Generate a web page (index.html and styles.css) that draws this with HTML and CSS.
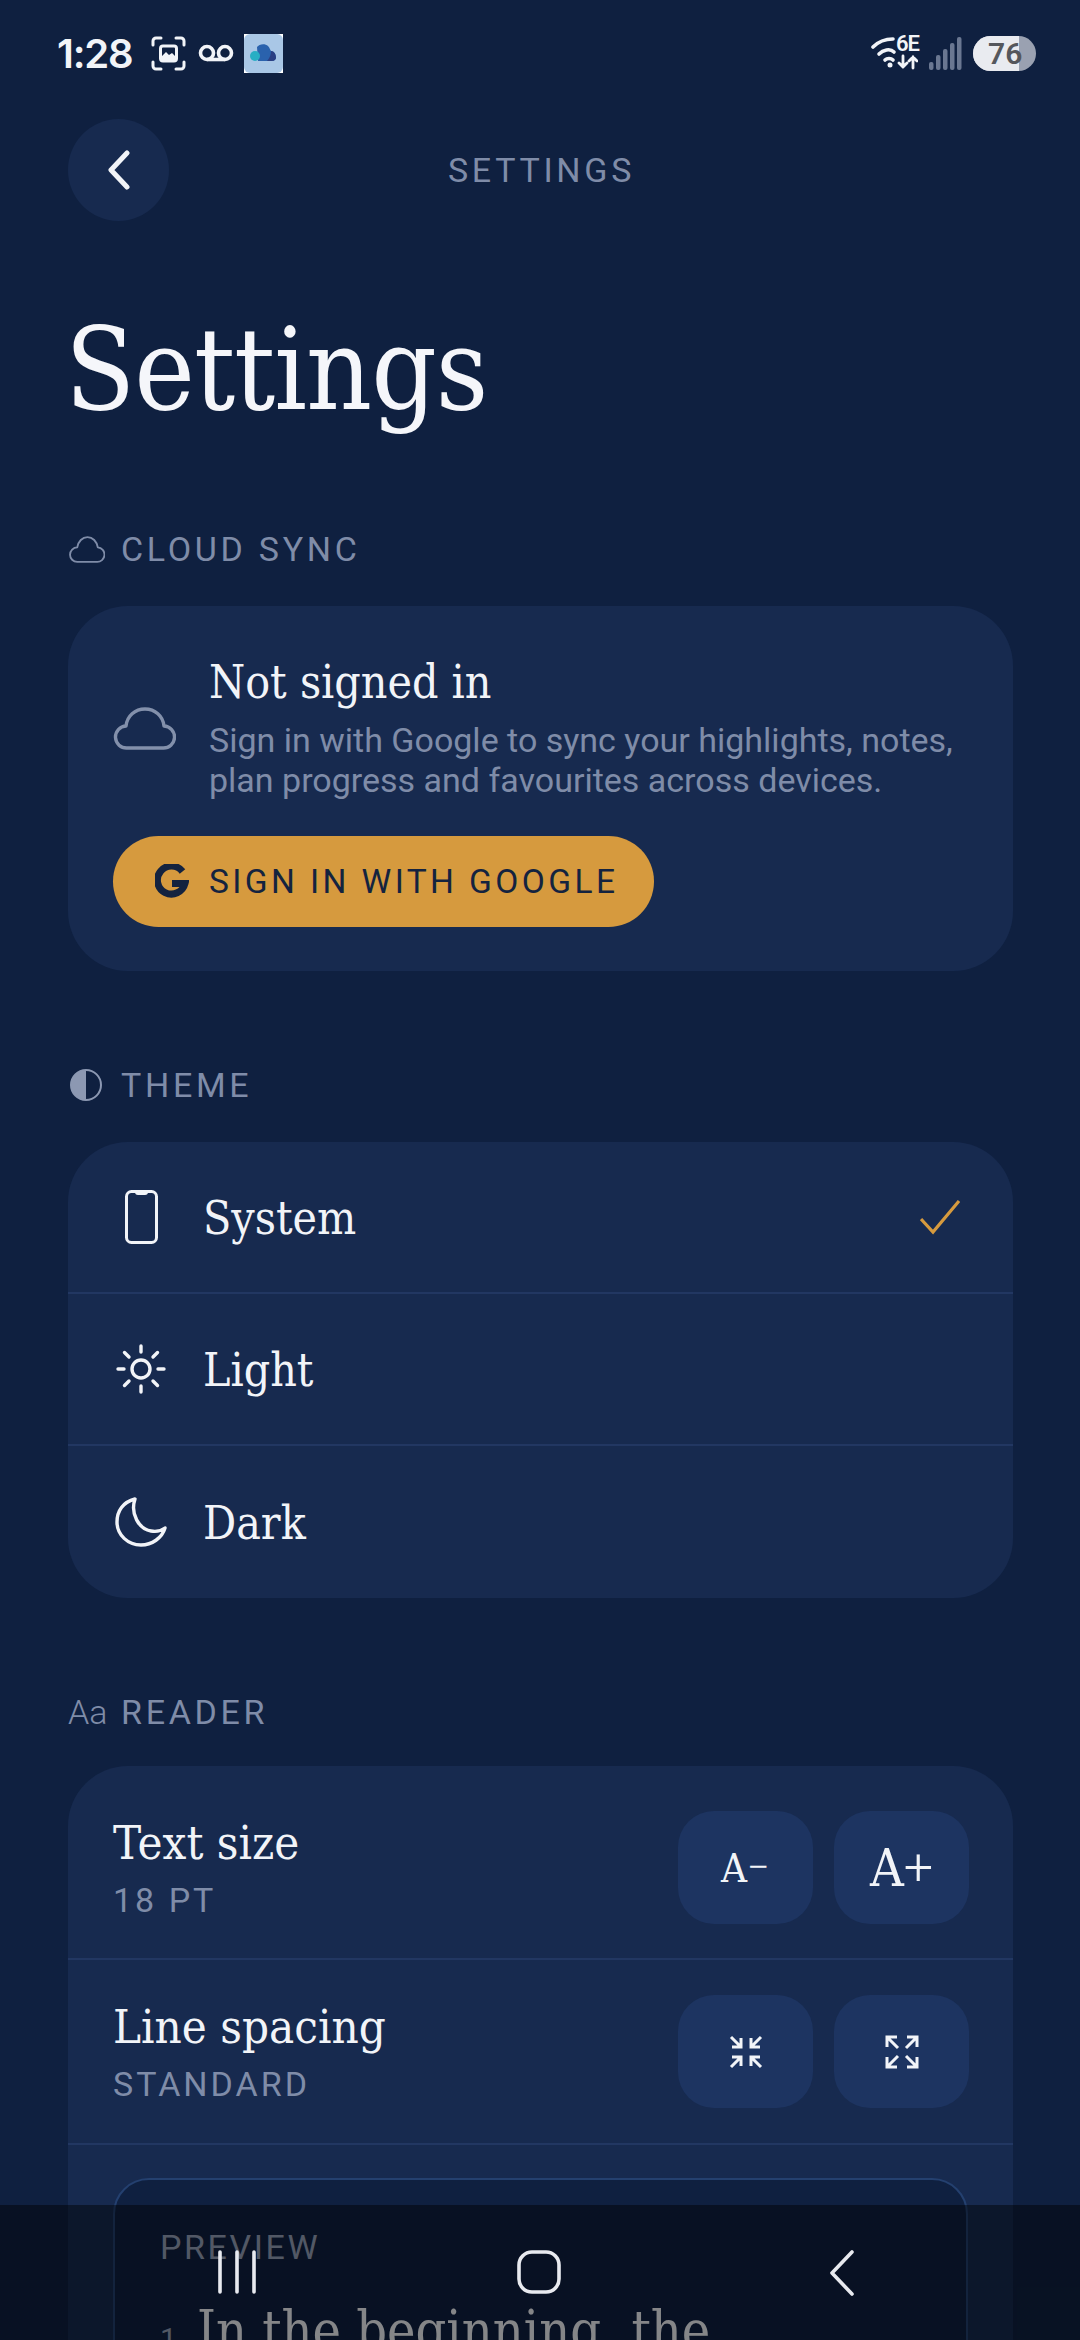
FILE: index.html
```html
<!DOCTYPE html>
<html lang="en">

<head>
    <meta charset="UTF-8">
    <meta name="viewport" content="width=device-width, initial-scale=1.0">
    <title>Settings</title>
    <link rel="stylesheet" href="styles.css">
</head>

<body>
    <div class="screen">
        <div class="statusBar">
            <div class="statusLeft">
                <span class="time">1:28</span>
                <svg class="icoShot" viewBox="0 0 35 35" fill="none" stroke="#f2f4f8" stroke-width="3" stroke-linecap="round">
                    <path d="M2 9V5a3 3 0 0 1 3-3h5M25 2h5a3 3 0 0 1 3 3v4M33 26v4a3 3 0 0 1-3 3h-5M10 33H5a3 3 0 0 1-3-3v-4"/>
                    <rect x="9.500" y="10" width="16" height="15" rx="2.500"/>
                    <path d="M10 21l5-5 3 3 3-2 4 4v3H10z" fill="#f2f4f8" stroke="none"/>
                </svg>
                <svg class="icoVoice" viewBox="0 0 36 20" fill="none" stroke="#f2f4f8" stroke-width="3.600">
                    <circle cx="9" cy="10" r="6.500"/>
                    <circle cx="27" cy="10" r="6.500"/>
                    <path d="M9 16.500h18"/>
                </svg>
                <svg class="icoApp" viewBox="0 0 39 39">
                    <rect width="39" height="39" fill="#fff"/>
                    <rect width="39" height="39" rx="6" fill="#a9c7e6"/>
                    <path d="M13 13c2-3 8-4 11-1 2 2 2 4 3 5 3 0 5 3 5 7-1 3-3 3-6 3H14z" fill="#2a62ad"/>
                    <path d="M27 17c3 0 5 3 5 7-1 3-3 3-6 3h-3c3-3 4-7 4-10z" fill="#2b3f83"/>
                    <circle cx="11" cy="22" r="5" fill="#27aec4"/>
                </svg>
            </div>
            <div class="statusRight">
                <div class="wifi">
                    <svg class="icoWifi" viewBox="0 0 47 34" fill="none" stroke="#f2f4f8" stroke-width="3.600" stroke-linecap="round">
                        <path d="M2 11c5-5 11-8 20-8"/>
                        <path d="M8 18c4-4 11-6 15-2"/>
                        <path d="M14 24c2-2 6-2 8 0"/>
                        <circle cx="19" cy="29" r="2.500" fill="#f2f4f8" stroke="none"/>
                        <path d="M32 20v11m-4-4 4 4 4-4M42 32V21m-4 4 4-4 4 4" stroke-width="2.800"/>
                    </svg>
                    <span class="wifiTag">6E</span>
                </div>
                <svg class="icoSignal" viewBox="0 0 33 33" fill="#6a7791">
                    <rect x="0" y="25" width="4.500" height="8" rx="2"/>
                    <rect x="7" y="18" width="4.500" height="15" rx="2"/>
                    <rect x="14" y="12" width="4.500" height="21" rx="2"/>
                    <rect x="21" y="6" width="4.500" height="27" rx="2"/>
                    <rect x="28" y="0" width="4.500" height="33" rx="2"/>
                </svg>
                <div class="battery"><div class="batteryFill"><span>76</span></div></div>
            </div>
        </div>

        <div class="topBar">
            <div class="backBtn">
                <svg viewBox="0 0 24 40" fill="none" stroke="#f2f4f8" stroke-width="5" stroke-linecap="round" stroke-linejoin="round">
                    <path d="M20 3 4 20l16 17"/>
                </svg>
            </div>
            <span class="topTitle">SETTINGS</span>
        </div>

        <h1 class="pageTitle">Settings</h1>

        <div class="sectionLabel">
            <span class="labelIcon">
                <svg class="icoCloudSmall" viewBox="0 0 35 26" fill="none" stroke="#7f8ca8" stroke-width="1.800" stroke-linejoin="round">
                    <path d="M8 25h19a7 7 0 0 0 1-14C27 5 23 1 18 1s-9 4-10 10a7 7 0 0 0 0 14z"/>
                </svg>
            </span>
            <span>CLOUD SYNC</span>
        </div>
        <div class="card signCard">
            <div class="signRow">
                <svg class="icoCloudBig" viewBox="0 0 63 43" fill="none" stroke="#8390ab" stroke-width="3.400" stroke-linejoin="round">
                    <path d="M14 41h36a11 11 0 0 0 1-22C50 9 42 2 32 2S14 9 13 19a11 11 0 0 0 1 22z"/>
                </svg>
                <div>
                    <div class="signTitle">Not signed in</div>
                    <div class="signText">Sign in with Google to sync your highlights, notes,<br>plan progress and favourites across devices.</div>
                </div>
            </div>
            <div class="googleBtn">
                <svg class="icoG" viewBox="0 0 34 36" fill="none" stroke="#14233f" stroke-width="7">
                    <path d="M27.500 7.500A14 14 0 1 0 30 19.500H17"/>
                </svg>
                <span>SIGN IN WITH GOOGLE</span>
            </div>
        </div>

        <div class="sectionLabel">
            <span class="labelIcon">
                <svg class="icoTheme" viewBox="0 0 32 32">
                    <circle cx="16" cy="16" r="15" fill="none" stroke="#8c98b2" stroke-width="2"/>
                    <path d="M16 1a15 15 0 0 0 0 30z" fill="#8c98b2"/>
                </svg>
            </span>
            <span>THEME</span>
        </div>
        <div class="card">
            <div class="themeRow">
                <span class="themeIcon">
                    <svg class="icoPhone" viewBox="0 0 33 54" fill="none" stroke="#f2f4f8" stroke-width="3">
                        <rect x="1.500" y="1.500" width="30" height="51" rx="5"/>
                        <path d="M10 2h13c0 2-1 3-3 3h-7c-2 0-3-1-3-3z" fill="#f2f4f8" stroke="none"/>
                    </svg>
                </span>
                <span class="themeName">System</span>
                <svg class="icoCheck" viewBox="0 0 40 36" fill="none" stroke="#d69a3e" stroke-width="3.200">
                    <path d="M1 20l12 13L39 2"/>
                </svg>
            </div>
            <div class="themeRow">
                <span class="themeIcon">
                    <svg class="icoSun" viewBox="0 0 50 50" fill="none" stroke="#f2f4f8" stroke-width="3.400" stroke-linecap="round">
                        <circle cx="25" cy="25" r="9"/>
                        <path d="M25 2v6M25 42v6M2 25h6M42 25h6M8.500 8.500l4.500 4.500M37 37l4.500 4.500M8.500 41.500l4.500-4.500M37 13l4.500-4.500"/>
                    </svg>
                </span>
                <span class="themeName">Light</span>
            </div>
            <div class="themeRow">
                <span class="themeIcon">
                    <svg class="icoMoon" viewBox="0 0 52 50" fill="none" stroke="#f2f4f8" stroke-width="3.400" stroke-linejoin="round">
                        <path d="M20 2C8 5 2 14 2 25c0 13 11 23 24 23 11 0 21-7 24-17-4 3-9 4-14 3C24 32 15 17 20 2z"/>
                    </svg>
                </span>
                <span class="themeName">Dark</span>
            </div>
        </div>

        <div class="sectionLabel">
            <span class="labelIcon labelAa">Aa</span>
            <span>READER</span>
        </div>
        <div class="card readerCard">
            <div class="readerRow">
                <div>
                    <div class="readerName">Text size</div>
                    <div class="readerValue">18 PT</div>
                </div>
                <div class="readerBtns">
                    <div class="squareBtn smallA">A<span class="signMark">−</span></div>
                    <div class="squareBtn bigA">A<span class="signMark">+</span></div>
                </div>
            </div>
            <div class="readerRow">
                <div>
                    <div class="readerName">Line spacing</div>
                    <div class="readerValue">STANDARD</div>
                </div>
                <div class="readerBtns">
                    <div class="squareBtn">
                        <svg class="icoArrows" viewBox="0 0 34 34" fill="none" stroke="#f2f4f8" stroke-width="3">
                            <path d="M2 2l9 9M12 3v9H3M32 2l-9 9M22 3v9h9M2 32l9-9M12 31v-9H3M32 32l-9-9M22 31v-9h9"/>
                        </svg>
                    </div>
                    <div class="squareBtn">
                        <svg class="icoArrows" viewBox="0 0 34 34" fill="none" stroke="#f2f4f8" stroke-width="3">
                            <path d="M3 3l10 10M2 12V2h10M31 3 21 13M32 12V2H22M3 31l10-10M2 22v10h10M31 31 21 21M32 22v10H22"/>
                        </svg>
                    </div>
                </div>
            </div>
            <div class="previewBox">
                <div class="previewLabel">PREVIEW</div>
                <div class="previewText"><span class="verseNum">1</span>In the beginning, the</div>
            </div>
        </div>

        <div class="navBar">
            <svg class="navMenu" viewBox="0 0 40 44" fill="none" stroke="#e8eaef" stroke-width="3.600" stroke-linecap="round">
                <path d="M3 2v40M20 2v40M37 2v40"/>
            </svg>
            <svg class="navHome" viewBox="0 0 44 44" fill="none" stroke="#e8eaef" stroke-width="3.600">
                <rect x="2" y="2" width="40" height="40" rx="13"/>
            </svg>
            <svg class="navBack" viewBox="0 0 26 46" fill="none" stroke="#e8eaef" stroke-width="3.600" stroke-linecap="round" stroke-linejoin="round">
                <path d="M23 2 3 23l20 21"/>
            </svg>
        </div>
    </div>
</body>

</html>
```

FILE: styles.css
```css
* {
    box-sizing: border-box;
}

body {
    margin: 0;
    background-color: #0f2040;
}

.screen {
    position: relative;
    width: 1080px;
    height: 2340px;
    padding: 0 67px 0 68px;
    overflow: hidden;
    background-color: #0f2040;
    color: #f2f4f8;
    font-family: "Roboto", "Liberation Sans", sans-serif;
}

/* status bar */
.statusBar {
    display: flex;
    justify-content: space-between;
    align-items: center;
    height: 106px;
    margin: 0 -23px 0 -11px;
}

.statusLeft,
.statusRight {
    display: flex;
    align-items: center;
}

.time {
    font-family: "Inter", "Roboto", sans-serif;
    font-size: 40px;
    font-weight: 600;
    letter-spacing: -1.200px;
    margin-right: 19px;
}

.icoShot {
    width: 35px;
    height: 35px;
    margin-right: 12px;
}

.icoVoice {
    width: 36px;
    height: 20px;
    margin-right: 10px;
}

.icoApp {
    width: 39px;
    height: 39px;
}

.wifi {
    position: relative;
    width: 47px;
    height: 34px;
    margin-right: 11px;
}

.icoWifi {
    width: 47px;
    height: 34px;
    display: block;
}

.wifiTag {
    position: absolute;
    top: -4px;
    right: -1px;
    font-size: 22px;
    font-weight: 600;
    line-height: 24px;
    letter-spacing: -1px;
}

.icoSignal {
    width: 33px;
    height: 33px;
    margin-right: 11px;
}

.battery {
    width: 63px;
    height: 35px;
    border-radius: 18px;
    background-color: #9aa1b1;
    overflow: hidden;
}

.batteryFill {
    width: 46px;
    height: 35px;
    padding-left: 15px;
    background-color: #e9ebf0;
    color: #55575c;
    font-size: 30px;
    font-weight: 600;
    line-height: 35px;
}

/* header */
.topBar {
    position: relative;
    display: flex;
    align-items: center;
    justify-content: center;
    height: 102px;
    margin-top: 13px;
}

.backBtn {
    position: absolute;
    left: 0;
    top: 0;
    width: 101px;
    height: 102px;
    border-radius: 50%;
    background-color: #172a4f;
    display: flex;
    align-items: center;
    justify-content: center;
}

.backBtn svg {
    width: 24px;
    height: 40px;
    margin-left: 1px;
}

.topTitle {
    margin-left: 2px;
    font-size: 34px;
    letter-spacing: 3.700px;
    color: #7f8ca8;
}

.pageTitle {
    margin: 79px 0 0 -3px;
    font-family: "DejaVu Serif Condensed", "DejaVu Serif", "Liberation Serif", serif;
    font-size: 114px;
    font-weight: 400;
    line-height: 140px;
    letter-spacing: -1px;
    color: #f5f6fa;
}

/* section */
.sectionLabel {
    display: flex;
    align-items: center;
    height: 40px;
    margin-top: 94px;
    font-size: 34px;
    letter-spacing: 3.700px;
    color: #7f8ca8;
}

.pageTitle + .sectionLabel {
    margin-top: 89px;
}

.labelIcon {
    display: flex;
    align-items: center;
    width: 53px;
    flex-shrink: 0;
}

.icoCloudSmall {
    width: 36px;
    height: 27px;
    margin-left: 1px;
}

.icoTheme {
    width: 32px;
    height: 32px;
    margin-left: 2px;
}

.labelAa {
    font-weight: 300;
    font-size: 34px;
    letter-spacing: 0;
}

.card {
    margin-top: 37px;
    border-radius: 60px;
    background-color: #172a4f;
    overflow: hidden;
}

.signCard {
    height: 365px;
    padding: 45px;
}

.signRow {
    display: flex;
    align-items: center;
    gap: 33px;
    height: 149px;
}

.icoCloudBig {
    width: 63px;
    height: 43px;
    flex-shrink: 0;
    margin-top: 6px;
}

.signTitle {
    margin: -3px 0 3px;
    font-family: "DejaVu Serif Condensed", "DejaVu Serif", "Liberation Serif", serif;
    font-size: 46px;
    line-height: 69px;
}

.signText {
    font-size: 34px;
    line-height: 40px;
    color: #7f8ca8;
    white-space: nowrap;
}

.googleBtn {
    display: flex;
    align-items: center;
    gap: 20px;
    width: 541px;
    height: 91px;
    margin-top: 36px;
    padding-left: 42px;
    border-radius: 46px;
    background-color: #d69a3e;
    color: #14233f;
    font-size: 33.500px;
    letter-spacing: 3.400px;
}

.icoG {
    width: 34px;
    height: 36px;
}

/* theme */
.themeRow {
    display: flex;
    align-items: center;
    height: 152px;
    padding: 0 53px 0 45px;
    border-bottom: 2px solid #223762;
}

.themeRow:last-child {
    border-bottom: 0;
}

.themeIcon {
    display: flex;
    align-items: center;
    justify-content: center;
    width: 56px;
    margin-right: 34px;
}

.icoPhone {
    width: 33px;
    height: 54px;
}

.icoSun {
    width: 50px;
    height: 50px;
}

.icoMoon {
    width: 52px;
    height: 50px;
}

.themeName {
    flex: 1;
    padding-top: 2px;
    font-family: "DejaVu Serif Condensed", "DejaVu Serif", "Liberation Serif", serif;
    font-size: 46px;
}

.icoCheck {
    width: 40px;
    height: 36px;
}

/* reader */
.readerCard {
    height: 800px;
    margin-top: 34px;
    padding-top: 10px;
}

.readerRow {
    display: flex;
    align-items: center;
    justify-content: space-between;
    padding: 35px 44px 35px 45px;
    border-bottom: 2px solid #223762;
}

.readerRow:first-child {
    padding-bottom: 34px;
}

.readerName {
    font-family: "DejaVu Serif Condensed", "DejaVu Serif", "Liberation Serif", serif;
    font-size: 47px;
    line-height: 60px;
}

.readerValue {
    margin-top: 5px;
    font-size: 34px;
    line-height: 44px;
    letter-spacing: 3px;
    color: #7f8ca8;
}

.readerBtns {
    display: flex;
    gap: 21px;
}

.squareBtn {
    display: flex;
    align-items: center;
    justify-content: center;
    width: 135px;
    height: 113px;
    border-radius: 36px;
    background-color: #1d3461;
    font-family: "DejaVu Serif Condensed", "DejaVu Serif", "Liberation Serif", serif;
}

.smallA {
    font-size: 40px;
}

.bigA {
    font-size: 52px;
}

.signMark {
    font-family: "Roboto", sans-serif;
    font-weight: 300;
}

.icoArrows {
    width: 34px;
    height: 34px;
}

.previewBox {
    height: 400px;
    margin: 33px 45px 0;
    padding: 47px 45px;
    border: 2px solid #24406f;
    border-radius: 36px;
    background-color: #0f2040;
}

.previewLabel {
    font-size: 34px;
    line-height: 40px;
    letter-spacing: 2.600px;
    color: #95a0b8;
}

.previewText {
    margin-top: 29px;
    font-family: "DejaVu Serif Condensed", "DejaVu Serif", "Liberation Serif", serif;
    font-size: 53.500px;
    line-height: 70px;
    white-space: nowrap;
}

.verseNum {
    margin-right: 20px;
    font-family: "Roboto", sans-serif;
    font-size: 30px;
    color: #95a0b8;
}

/* system nav lies over the page */
.navBar {
    position: absolute;
    left: 0;
    right: 0;
    bottom: 0;
    height: 135px;
    background-color: rgba(0, 0, 0, 0.45);
}

.navBar svg {
    position: absolute;
    top: 45px;
}

.navMenu {
    left: 217px;
    width: 40px;
    height: 44px;
}

.navHome {
    left: 517px;
    width: 44px;
    height: 44px;
}

.navBack {
    left: 829px;
    width: 26px;
    height: 46px;
}
```
